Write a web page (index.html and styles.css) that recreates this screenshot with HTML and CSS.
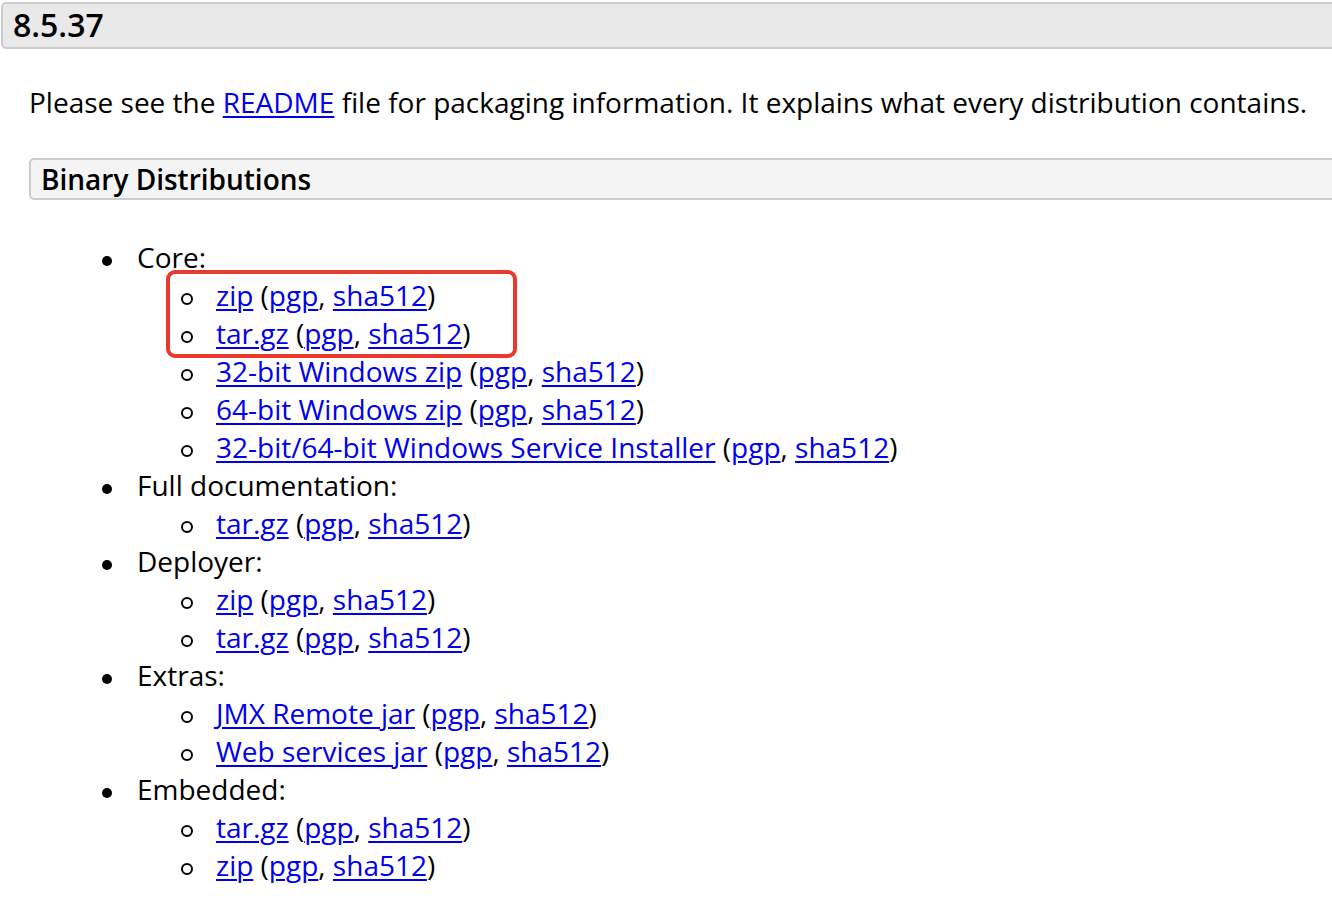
FILE: index.html
```html
<!DOCTYPE html>
<html>
<head>
<meta charset="utf-8">
<link rel="stylesheet" href="styles.css">
</head>
<body>
<div class="page">
  <h3 class="version">8.5.37</h3>
  <div class="section">
    <p class="intro">Please see the <a href="#">README</a> file for packaging information. It explains what every distribution contains.</p>
    <h4 class="subhead">Binary Distributions</h4>
    <ul class="dist">
      <li>Core:
        <ul class="files">
          <li><a href="#">zip</a> (<a href="#">pgp</a>, <a href="#">sha512</a>)</li>
          <li><a href="#">tar.gz</a> (<a href="#">pgp</a>, <a href="#">sha512</a>)</li>
          <li><a href="#">32-bit Windows zip</a> (<a href="#">pgp</a>, <a href="#">sha512</a>)</li>
          <li><a href="#">64-bit Windows zip</a> (<a href="#">pgp</a>, <a href="#">sha512</a>)</li>
          <li><a href="#">32-bit/64-bit Windows Service Installer</a> (<a href="#">pgp</a>, <a href="#">sha512</a>)</li>
        </ul>
      </li>
      <li>Full documentation:
        <ul class="files">
          <li><a href="#">tar.gz</a> (<a href="#">pgp</a>, <a href="#">sha512</a>)</li>
        </ul>
      </li>
      <li>Deployer:
        <ul class="files">
          <li><a href="#">zip</a> (<a href="#">pgp</a>, <a href="#">sha512</a>)</li>
          <li><a href="#">tar.gz</a> (<a href="#">pgp</a>, <a href="#">sha512</a>)</li>
        </ul>
      </li>
      <li>Extras:
        <ul class="files">
          <li><a href="#">JMX Remote jar</a> (<a href="#">pgp</a>, <a href="#">sha512</a>)</li>
          <li><a href="#">Web services jar</a> (<a href="#">pgp</a>, <a href="#">sha512</a>)</li>
        </ul>
      </li>
      <li>Embedded:
        <ul class="files">
          <li><a href="#">tar.gz</a> (<a href="#">pgp</a>, <a href="#">sha512</a>)</li>
          <li><a href="#">zip</a> (<a href="#">pgp</a>, <a href="#">sha512</a>)</li>
        </ul>
      </li>
    </ul>
  </div>
  <div class="highlight"></div>
</div>
</body>
</html>
```

FILE: styles.css
```css
html, body {
  margin: 0;
  padding: 0;
  background: #fff;
  overflow: hidden;
}
.page {
  position: relative;
  font-family: "Open Sans", "Noto Sans", sans-serif;
  font-size: 28px;
  color: #000;
  width: 1332px;
  height: 918px;
  overflow: hidden;
}
a {
  color: #0000ee;
  text-decoration: underline;
  text-underline-offset: 3px;
  text-decoration-thickness: 2px;
}
.version {
  margin: 2px -20px 0 1px;
  padding: 0 10px 1px 10px;
  height: 42px;
  line-height: 42px;
  background: #e9e9e9;
  border: 2px solid #cccccc;
  border-radius: 5px;
  font-size: 32px;
  font-weight: 600;
}
.section {
  padding-left: 29px;
}
.intro {
  margin: 34px 0 0 0;
  line-height: 38px;
}
.subhead {
  margin: 37px -20px 0 0;
  padding: 0 10px;
  height: 38px;
  line-height: 38px;
  background: #f4f4f4;
  border: 2px solid #cccccc;
  border-radius: 5px;
  font-size: 28px;
  font-weight: 600;
}
.dist {
  margin: 38px 0 0 0;
  padding-left: 108px;
  list-style: none;
  line-height: 38px;
}
.dist > li::before {
  content: "";
  display: inline-block;
  width: 10px;
  height: 10px;
  border-radius: 50%;
  background: #000;
  margin-left: -35px;
  margin-right: 25px;
  vertical-align: middle;
}
.files {
  margin: 0;
  padding-left: 79px;
  list-style: none;
}
.files > li::before {
  content: "";
  display: inline-block;
  box-sizing: border-box;
  width: 12px;
  height: 12px;
  border-radius: 50%;
  border: 2px solid #000;
  background: transparent;
  margin-left: -35px;
  margin-right: 23px;
  vertical-align: middle;
}
.highlight {
  position: absolute;
  left: 166px;
  top: 270px;
  width: 343px;
  height: 80px;
  border: 4px solid #e8392c;
  border-radius: 9px;
}
```
